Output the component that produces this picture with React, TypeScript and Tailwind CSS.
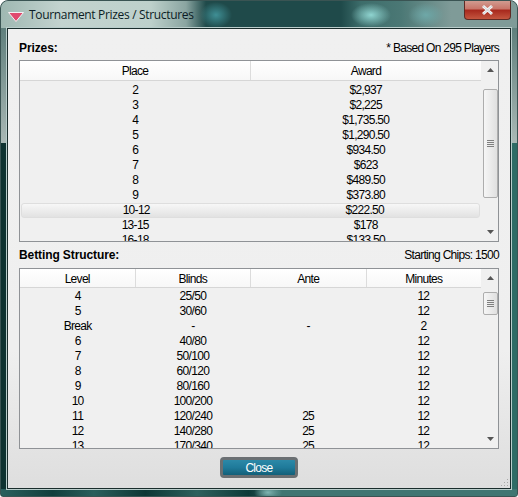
import React from 'react';

const prizeRows = [
  ['2', '$2,937'],
  ['3', '$2,225'],
  ['4', '$1,735.50'],
  ['5', '$1,290.50'],
  ['6', '$934.50'],
  ['7', '$623'],
  ['8', '$489.50'],
  ['9', '$373.80'],
  ['10-12', '$222.50'],
  ['13-15', '$178'],
  ['16-18', '$133.50'],
];

const bettingRows = [
  ['4', '25/50', '', '12'],
  ['5', '30/60', '', '12'],
  ['Break', '-', '-', '2'],
  ['6', '40/80', '', '12'],
  ['7', '50/100', '', '12'],
  ['8', '60/120', '', '12'],
  ['9', '80/160', '', '12'],
  ['10', '100/200', '', '12'],
  ['11', '120/240', '25', '12'],
  ['12', '140/280', '25', '12'],
  ['13', '170/340', '25', '12'],
];

type ScrollbarProps = { thumbClass: string };

const Scrollbar: React.FC<ScrollbarProps> = ({ thumbClass }) => (
  <div className="w-[17px] shrink-0 flex flex-col items-center pl-[2px] bg-[#f0f0f0]">
    <svg width="7" height="4" viewBox="0 0 7 4" className="mt-[7px] shrink-0">
      <path d="M3.5 0 L7 4 L0 4 Z" fill="#555555" />
    </svg>
    <div className={`w-[15px] flex items-center justify-center rounded-[2px] border border-[#adadad] bg-[linear-gradient(90deg,#f6f6f6,#e0e0e0)] ${thumbClass}`}>
      <div className="w-[7px] flex flex-col gap-[1px]">
        <div className="h-px bg-[#808080]" />
        <div className="h-px bg-[#808080]" />
        <div className="h-px bg-[#808080]" />
        <div className="h-px bg-[#808080]" />
      </div>
    </div>
    <div className="flex-1" />
    <svg width="7" height="4" viewBox="0 0 7 4" className="mb-[7px] shrink-0">
      <path d="M0 0 L7 0 L3.5 4 Z" fill="#555555" />
    </svg>
  </div>
);

type TableProps = {
  heads: string[];
  rows: string[][];
  selected?: number;
  headClass: string;
  rowClass: string;
  heightClass: string;
  thumbClass: string;
};

const DataTable: React.FC<TableProps> = ({ heads, rows, selected, headClass, rowClass, heightClass, thumbClass }) => (
  <div className={`flex border border-[#8f9296] bg-[#f0f0f0] overflow-hidden ${heightClass}`}>
    <div className="w-[461px] shrink-0 overflow-hidden">
      <div className={`flex border-b border-[#d6d6d6] bg-[linear-gradient(180deg,#ffffff,#f7f7f7)] ${headClass}`}>
        {heads.map((h, i) => (
          <div key={h} className={`flex-1 flex items-center justify-center pt-[1px] ${i > 0 ? 'border-l border-[#dcdcdc]' : ''}`}>
            {h}
          </div>
        ))}
      </div>
      {rows.map((row, idx) => (
        <div
          key={idx}
          className={`flex items-center ${rowClass} ${idx === selected ? 'mx-[1px] rounded-[3px] border border-[#dedede] bg-[linear-gradient(180deg,#f7f7f7,#e2e2e2)]' : ''}`}
        >
          {row.map((cell, c) => (
            <div key={c} className="flex-1 text-center leading-none">
              {cell}
            </div>
          ))}
        </div>
      ))}
    </div>
    <Scrollbar thumbClass={thumbClass} />
  </div>
);

const App: React.FC = () => {
  return (
    <div className="w-[518px] h-[497px] bg-white font-['Liberation_Sans',sans-serif] text-[12px] tracking-[-0.7px] text-black overflow-hidden">
      <div className="w-full h-full flex flex-col rounded-t-[8px] rounded-b-[3px] border border-[#3a5453] overflow-hidden bg-[linear-gradient(180deg,#5f7f7c_27px,#a9b8b5_142px,transparent_142px),linear-gradient(90deg,#0e3230_0%,#0e3230_50%,#2f6b65_50%,#2f6b65_100%)]">
        {/* title bar */}
        <div className="h-[27px] shrink-0 flex items-start pl-[7px] pt-[5px] bg-[radial-gradient(ellipse_16px_13px_at_215px_14px,#3f8f95,transparent),radial-gradient(ellipse_20px_12px_at_370px_14px,#8fd4d0,transparent),radial-gradient(ellipse_18px_12px_at_425px_14px,#6ea8a8,transparent),linear-gradient(90deg,#9fb8b2_0px,#c3d3cf_60px,#bdd0cb_150px,#8aa5a1_185px,#1f4a4a_205px,#1f4a4a_340px,#3d6d6b_360px,#4b7875_400px,#7f9b98_450px,#7f9b98_100%)]">
          <svg width="16" height="10" viewBox="0 0 16 10" className="mt-[6px] shrink-0">
            <path d="M0.5 0.5 L15.5 0.5 L8 9.5 Z" fill="#e04a6e" stroke="#f5f0f2" strokeWidth="1" />
          </svg>
          <span className="ml-[5px] text-[#0b1c25] font-['Open_Sans',sans-serif] text-[12px] tracking-[-0.33px] leading-[18px]">Tournament Prizes / Structures</span>
          <div className="ml-auto mr-[6px] -mt-[6px] w-[47px] h-[20px] flex items-center justify-center rounded-b-[4px] border border-[#5e2a24] border-t-0 bg-[linear-gradient(180deg,#d2a095_0%,#c8766a_45%,#a82a1e_55%,#c4563f_100%)]">
            <svg width="15" height="12" viewBox="0 0 15 12">
              <path d="M3 2 L12 10 M12 2 L3 10" stroke="#f6f6f6" strokeWidth="3" />
              <path d="M3 2 L12 10 M12 2 L3 10" stroke="#c9d2d8" strokeWidth="1" />
            </svg>
          </div>
        </div>

        {/* client area */}
        <div className="relative ml-[6px] mr-[6px] h-[461px] shrink-0 border border-[#1a2d2c] outline outline-1 outline-[#b9cdcb] bg-[linear-gradient(180deg,#f0f0f0_0%,#efefef_70%,#dedede_100%)] px-[11px]">
          <div className="h-[31px] flex items-end justify-between pb-[4px] leading-[15px]">
            <span className="font-bold tracking-[-0.1px]">Prizes:</span>
            <span>* Based On 295 Players</span>
          </div>
          <DataTable
            heads={['Place', 'Award']}
            rows={prizeRows}
            selected={8}
            headClass="h-[20px] mb-[1px]"
            rowClass="h-[15.1px]"
            heightClass="h-[182px]"
            thumbClass="mt-[17px] h-[109px]"
          />
          <div className="h-[26px] flex items-center justify-between leading-[15px]">
            <span className="font-bold tracking-[-0.1px]">Betting Structure:</span>
            <span>Starting Chips: 1500</span>
          </div>
          <DataTable
            heads={['Level', 'Blinds', 'Ante', 'Minutes']}
            rows={bettingRows}
            headClass="h-[19px]"
            rowClass="h-[15px]"
            heightClass="h-[181px]"
            thumbClass="mt-[12px] h-[23px]"
          />
          <div className="flex justify-center pt-[8px]">
            <button className="w-[78px] h-[21px] rounded-[4px] border-[3px] border-[#6a6f72] bg-[linear-gradient(180deg,#2c89a8_0%,#1f7a9a_50%,#126079_100%)] text-white leading-none">
              Close
            </button>
          </div>
          {/* resize grip */}
          <svg width="8" height="8" viewBox="0 0 8 8" className="absolute right-[1px] bottom-[1px]">
            <path d="M6 0h1v1H6zM6 3h1v1H6zM3 3h1v1H3zM6 6h1v1H6zM3 6h1v1H3zM0 6h1v1H0z" fill="#a8a8a8" />
          </svg>
        </div>

        {/* bottom edge */}
        <div className="flex-1 bg-[radial-gradient(ellipse_14px_8px_at_267px_50%,#7fb5b2,transparent),linear-gradient(90deg,#2a5f5c_0%,#123f3d_10%,#2a5f5c_18%,#0d3735_28%,#2d615d_38%,#0d3a38_48%,#1c4a48_50%,#3f7672_54%,#3f7672_100%)]" />
      </div>
    </div>
  );
};

export default App;
